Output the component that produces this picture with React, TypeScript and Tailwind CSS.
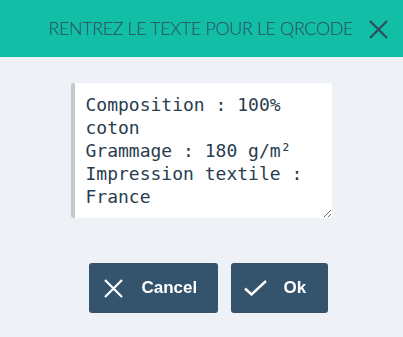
import { useEffect, useRef } from 'react';

const CrossIcon = ({ size, stroke }: { size: number; stroke: number }) => (
  <svg width={size} height={size} viewBox={`0 0 ${size} ${size}`} fill="none" stroke="currentColor" strokeWidth={stroke} strokeLinecap="butt">
    <path d={`M1 1L${size - 1} ${size - 1}M${size - 1} 1L1 ${size - 1}`} />
  </svg>
);

const App = () => {
  const text = 'Composition : 100% coton\nGrammage : 180 g/m²\nImpression textile : France';
  const ref = useRef<HTMLTextAreaElement>(null);

  useEffect(() => {
    const el = ref.current;
    if (el) {
      el.focus();
      el.setSelectionRange(text.length, text.length);
    }
  }, []);

  return (
    <div className="w-[403px] h-[337px] bg-[#eef2f6] flex flex-col">
      {/* Header */}
      <div className="h-[57px] bg-[#12bea6] flex items-center justify-end pr-[15px]">
        <h1 className="text-[18px] font-light text-[#2f4b60] tracking-[-0.42px] mr-[16px] font-['Lato',sans-serif]">
          RENTREZ LE TEXTE POUR LE QRCODE
        </h1>
        <span className="text-[#2f4b60] mt-[1px]">
          <CrossIcon size={19} stroke={2.2} />
        </span>
      </div>

      {/* Textarea */}
      <div className="flex justify-center pt-[26px]">
        <textarea
          ref={ref}
          defaultValue={text}
          className="w-[261px] h-[135px] ml-[-1px] bg-white border-l-4 border-[#c3c7ce] rounded-[3px] pl-[11px] pr-[10px] pt-[10px] text-[18px] leading-[23px] text-[#2a3d4f] caret-[#2a3d4f] font-['DejaVu_Sans_Mono',monospace] resize-y outline-none"
        />
      </div>

      {/* Buttons */}
      <div className="flex justify-center gap-[13px] mt-[45px] ml-[13px]">
        <button className="w-[129px] h-[50px] bg-[#34536d] rounded-[3px] flex items-center pl-[15px] gap-[19px] text-white text-[17px] font-bold font-['Liberation_Sans',sans-serif]">
          <CrossIcon size={19} stroke={2.2} />
          Cancel
        </button>
        <button className="w-[97px] h-[50px] bg-[#34536d] rounded-[3px] flex items-center pl-[13px] gap-[17px] text-white text-[17px] font-bold font-['Liberation_Sans',sans-serif]">
          <svg width="23" height="16" viewBox="0 0 23 16" fill="none" stroke="currentColor" strokeWidth={2.4}>
            <path d="M1 8.5L7.5 14.5L22 1" />
          </svg>
          Ok
        </button>
      </div>
    </div>
  );
};

export default App;
